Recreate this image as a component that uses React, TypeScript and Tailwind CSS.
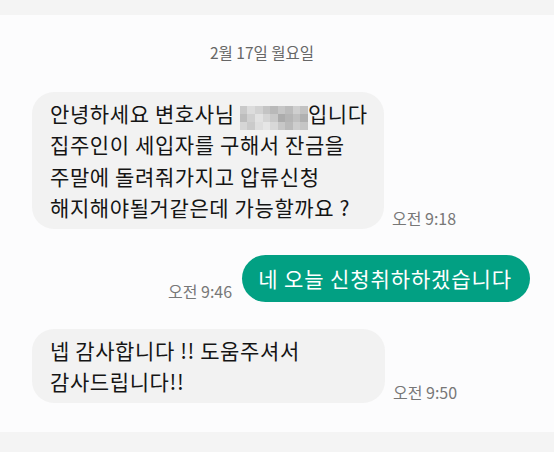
import type React from "react";

const FONT = {
	fontFamily: '"Noto Sans CJK KR", "Noto Sans", sans-serif',
};

const MOSAIC: string[][] = [
	["#c9c9c9", "#dcdcdc", "#d2d2d2", "#c4c4c4", "#b9b9b9", "#c6c6c6", "#bcbcbc", "#cfcfcf", "#c2c2c2"],
	["#bdbdbd", "#d0d0d0", "#e2e2e2", "#d5d5d5", "#c9c9c9", "#acacac", "#b5b5b5", "#c0c0c0", "#b0b0b0"],
	["#d6d6d6", "#cacaca", "#dedede", "#e6e6e6", "#d8d8d8", "#c7c7c7", "#bababa", "#cdcdcd", "#c5c5c5"],
];

const Mosaic = () => (
	<span className="inline-grid h-[24px] w-[68px] translate-y-[2px] grid-cols-9 grid-rows-3 align-middle">
		{MOSAIC.flat().map((c, i) => (
			<span key={i} style={{ backgroundColor: c }} />
		))}
	</span>
);

const Time = ({ children }: { children: React.ReactNode }) => (
	<span className="mb-[1px] whitespace-nowrap text-[16px] leading-[20px] text-[#777777]">
		{children}
	</span>
);

const Incoming = ({
	lines,
	time,
	width,
}: {
	lines: React.ReactNode[];
	time: string;
	width: string;
}) => (
	<div className="flex items-end gap-2 pl-8">
		<div
			className={`${width} rounded-[22px] bg-[#f2f2f2] px-[18px] py-[5.5px] text-[21px] leading-[31.5px] tracking-[0.6px] text-[#151515]`}
		>
			{lines.map((l, i) => (
				<div key={i} className="h-[31.5px] whitespace-nowrap">
					{l}
				</div>
			))}
		</div>
		<Time>{time}</Time>
	</div>
);

export default function App() {
	return (
		<div
			style={FONT}
			className="flex h-[452px] w-[554px] flex-col bg-[#f4f4f4]"
		>
			<div className="h-[15px] shrink-0" />
			<div className="flex h-[417px] flex-col bg-[#fcfcfd]">
				<div className="mt-[27px] pr-[30px] text-center text-[15.5px] leading-[20px] text-[#666666]">
					2월 17일 월요일
				</div>
				<div className="mt-[30px]">
					<Incoming
						width="w-[352px]"
						time="오전 9:18"
						lines={[
							<>
								안녕하세요 변호사님 <Mosaic />
								입니다
							</>,
							"집주인이 세입자를 구해서 잔금을",
							"주말에 돌려줘가지고 압류신청",
							"해지해야될거같은데 가능할까요 ?",
						]}
					/>
				</div>
				<div className="mt-[26px] flex items-end justify-end gap-[10px] pr-6">
					<Time>오전 9:46</Time>
					<div className="rounded-full bg-[#02a083] pl-4 pr-[18px] py-[7px] text-[21px] leading-[33px] tracking-[0.9px] text-white">
						네 오늘 신청취하하겠습니다
					</div>
				</div>
				<div className="mt-[27px]">
					<Incoming
						width="w-[353px]"
						time="오전 9:50"
						lines={["넵 감사합니다 !! 도움주셔서", "감사드립니다!!"]}
					/>
				</div>
			</div>
		</div>
	);
}
